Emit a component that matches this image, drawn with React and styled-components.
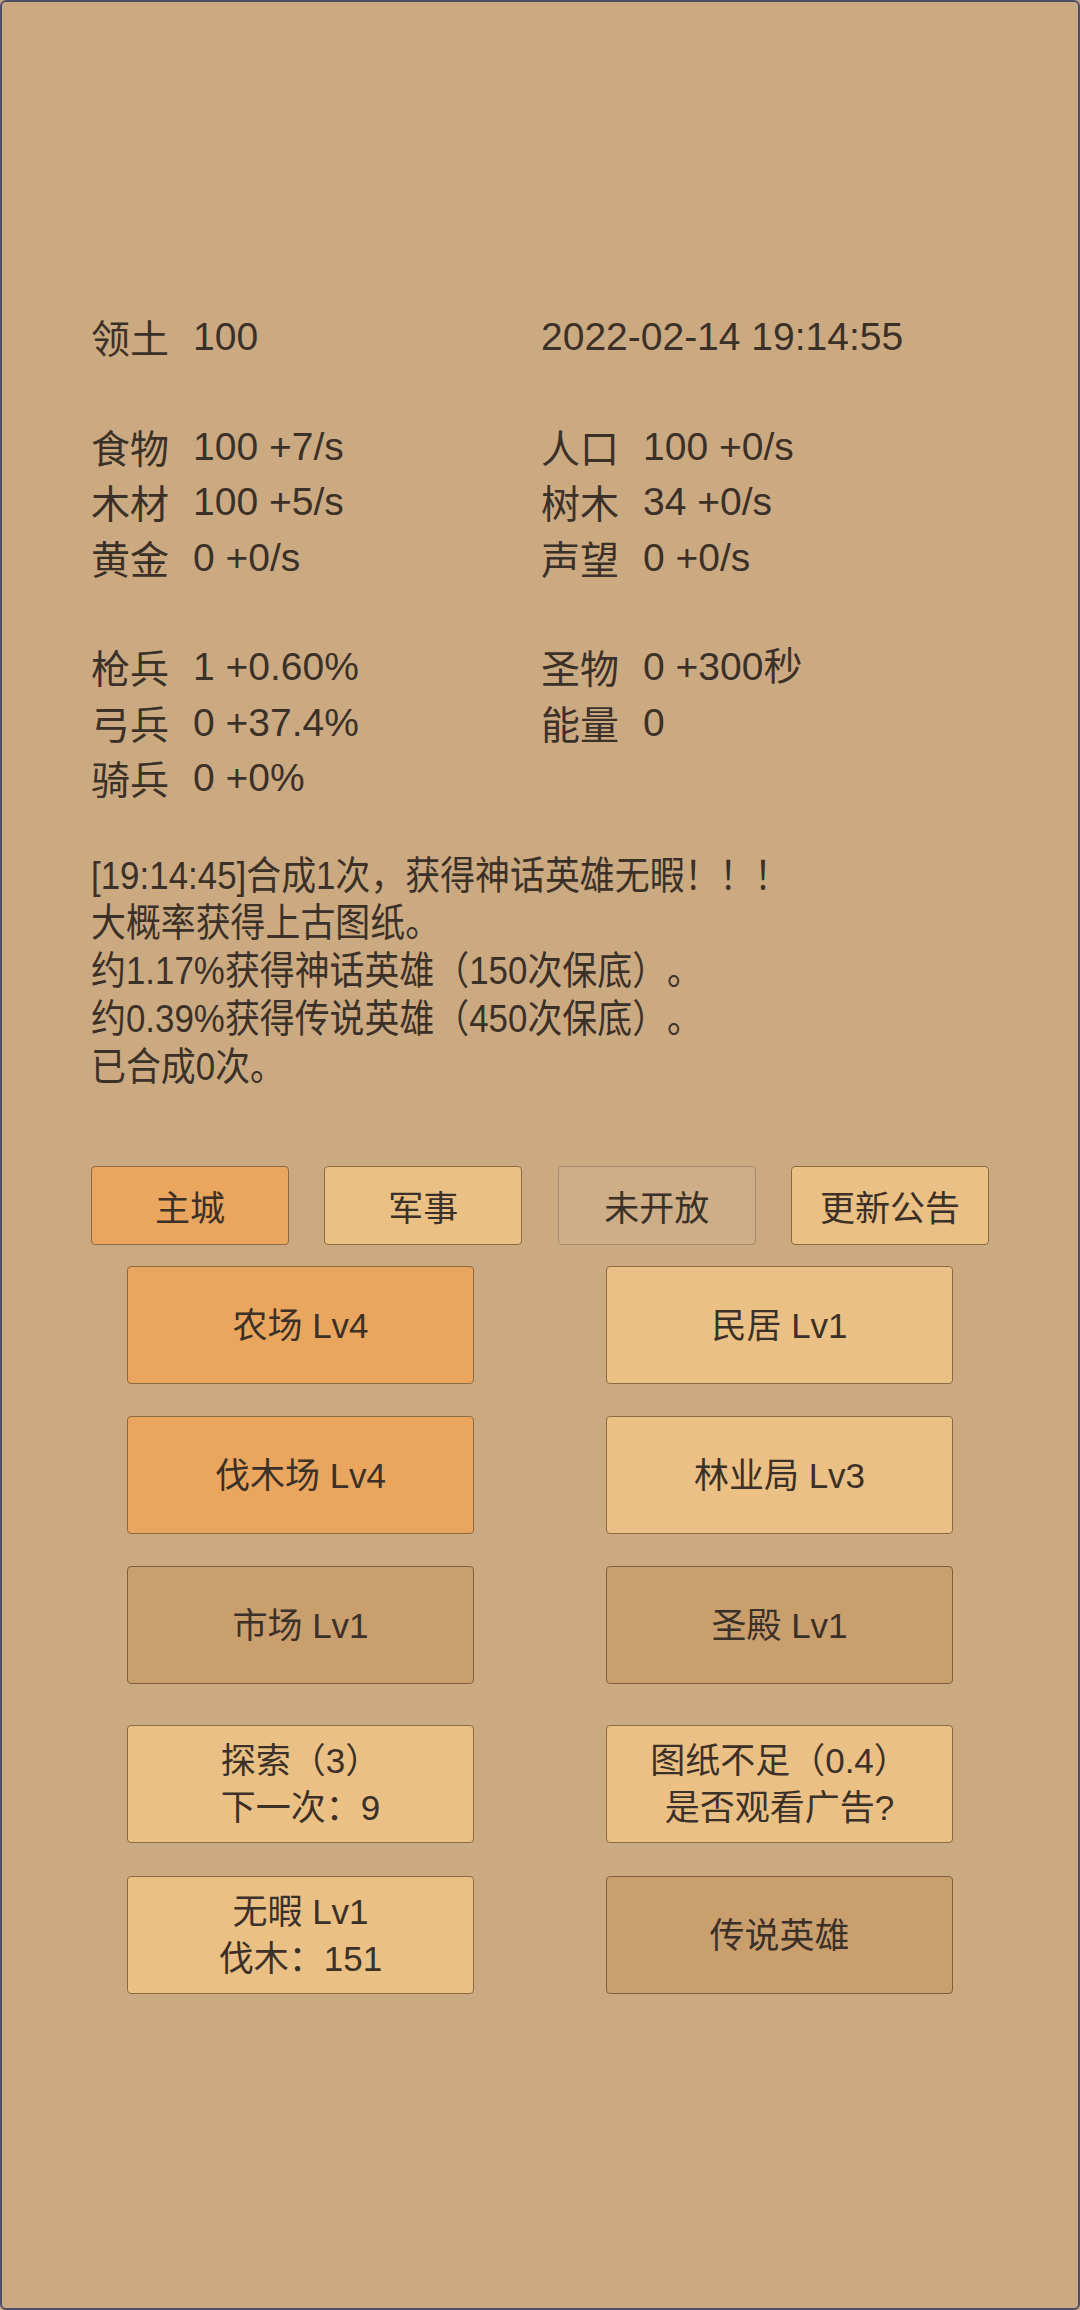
import React from 'react';
import styled, { createGlobalStyle, css } from 'styled-components';

const GlobalStyle = createGlobalStyle`
  html, body {
    margin: 0;
    padding: 0;
    background: #cbaa82;
  }
  * {
    box-sizing: border-box;
  }
`;

const Frame = styled.div`
  width: 1080px;
  height: 2310px;
  border: 2px solid #4c4e6a;
  border-radius: 6px;
  background: #cbaa82;
  padding: 307px 0 0 89px;
  font-family: "Liberation Sans", "Noto Sans CJK SC", sans-serif;
  color: #3b3128;
  text-spacing-trim: space-all;
`;

const Content = styled.div`
  width: 898px;
`;

const StatGroup = styled.div`
  display: grid;
  grid-template-columns: 450px 450px;
  font-size: 39px;
  line-height: 55.5px;
  & + & {
    margin-top: 54px;
  }
`;

const Stat = styled.div`
  display: flex;
  gap: 24px;
  white-space: nowrap;
`;

const Label = styled.span`
  font-family: "Noto Sans CJK SC", sans-serif;
`;

// the log in the game is drawn narrower than the stats above it
const Log = styled.div`
  margin-top: 46px;
  font-size: 39px;
  line-height: 47.8px;
  white-space: nowrap;
  transform: scaleX(0.895);
  transform-origin: left center;
`;

const Tabs = styled.div`
  margin-top: 76px;
  display: flex;
  justify-content: space-between;
`;

const fills = {
  active: css`
    background: #eaa65e;
    border-color: #8c6a44;
  `,
  light: css`
    background: #ebc084;
    border-color: #8c6a44;
  `,
  dim: css`
    background: #ca9f6e;
    border-color: #7e6040;
  `,
  off: css`
    background: #ceae86;
    border-color: #a38a6a;
  `,
};

const Tab = styled.div`
  width: 198px;
  height: 79px;
  display: flex;
  align-items: center;
  justify-content: center;
  font-size: 35px;
  border: 1.5px solid;
  border-radius: 4px;
  ${(p) => fills[p.$kind]}
`;

const ButtonGrid = styled.div`
  display: grid;
  grid-template-columns: 347px 347px;
  justify-content: center;
  column-gap: 132px;
  row-gap: ${(p) => p.$gap}px;
  margin-top: ${(p) => p.$top}px;
`;

const Button = styled.div`
  height: 118px;
  display: flex;
  flex-direction: column;
  align-items: center;
  justify-content: center;
  font-size: 35px;
  line-height: 47px;
  text-align: center;
  border: 1.5px solid;
  border-radius: 4px;
  ${(p) => fills[p.$kind]}
`;

const statGroups = [
  [['领土', '100'], [null, '2022-02-14 19:14:55']],
  [
    ['食物', '100 +7/s'], ['人口', '100 +0/s'],
    ['木材', '100 +5/s'], ['树木', '34 +0/s'],
    ['黄金', '0 +0/s'], ['声望', '0 +0/s'],
  ],
  [
    ['枪兵', '1 +0.60%'], ['圣物', '0 +300秒'],
    ['弓兵', '0 +37.4%'], ['能量', '0'],
    ['骑兵', '0 +0%'], null,
  ],
];

const logLines = [
  '[19:14:45]合成1次，获得神话英雄无暇！！！',
  '大概率获得上古图纸。',
  '约1.17%获得神话英雄（150次保底）。',
  '约0.39%获得传说英雄（450次保底）。',
  '已合成0次。',
];

const tabs = [
  ['主城', 'active'],
  ['军事', 'light'],
  ['未开放', 'off'],
  ['更新公告', 'light'],
];

const buildings = [
  ['农场 Lv4', 'active'],
  ['民居 Lv1', 'light'],
  ['伐木场 Lv4', 'active'],
  ['林业局 Lv3', 'light'],
  ['市场 Lv1', 'dim'],
  ['圣殿 Lv1', 'dim'],
];

const actions = [
  [['探索（3）', '下一次：9'], 'light'],
  [['图纸不足（0.4）', '是否观看广告?'], 'light'],
  [['无暇 Lv1', '伐木：151'], 'light'],
  [['传说英雄'], 'dim'],
];

export default function App() {
  return (
    <>
      <GlobalStyle />
      <Frame>
        <Content>
          {statGroups.map((group, gi) => (
            <StatGroup key={gi}>
              {group.map((item, i) =>
                item ? (
                  <Stat key={i}>
                    {item[0] && <Label>{item[0]}</Label>}
                    <span>{item[1]}</span>
                  </Stat>
                ) : (
                  <Stat key={i} />
                )
              )}
            </StatGroup>
          ))}

          <Log>
            {logLines.map((line) => (
              <div key={line}>{line}</div>
            ))}
          </Log>

          <Tabs>
            {tabs.map(([name, kind]) => (
              <Tab key={name} $kind={kind}>{name}</Tab>
            ))}
          </Tabs>

          <ButtonGrid $top={21} $gap={32}>
            {buildings.map(([name, kind]) => (
              <Button key={name} $kind={kind}>{name}</Button>
            ))}
          </ButtonGrid>

          <ButtonGrid $top={41} $gap={33}>
            {actions.map(([lines, kind]) => (
              <Button key={lines[0]} $kind={kind}>
                {lines.map((l) => (
                  <div key={l}>{l}</div>
                ))}
              </Button>
            ))}
          </ButtonGrid>
        </Content>
      </Frame>
    </>
  );
}
